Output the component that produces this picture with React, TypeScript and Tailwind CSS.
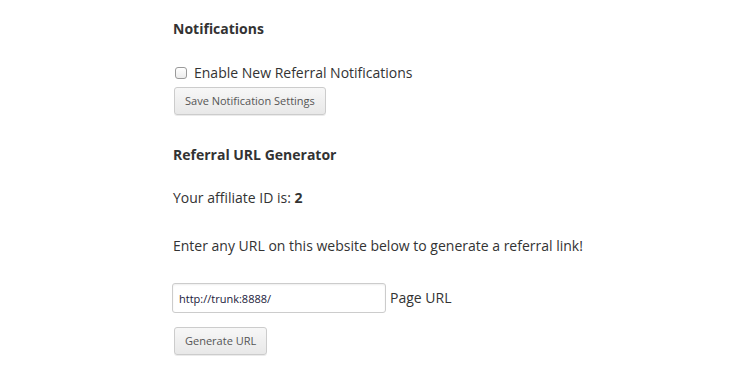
export default function App() {
  const font = { fontFamily: '"Open Sans", "Liberation Sans", sans-serif' };
  const btn =
    "h-[28px] rounded-[3px] border border-[#cccccc] bg-gradient-to-b from-[#f7f7f7] to-[#e8e8e8] px-[10px] text-[11px] text-[#555555] shadow-[0_1px_0_rgba(0,0,0,0.08)]";
  return (
    <div className="w-[750px] h-[381px] bg-white text-[#333333] text-[14px]" style={font}>
      <div className="pl-[173px] pt-[19px]">
        <h3 className="font-bold text-[14px] leading-[20px]">Notifications</h3>
        <label className="mt-[24px] flex items-center h-[20px]">
          <span className="ml-[2px] w-[12px] h-[12px] rounded-[3px] border border-[#9a9a9a] bg-gradient-to-b from-white to-[#ececec]" />
          <span className="ml-[7px] leading-[20px]">Enable New Referral Notifications</span>
        </label>
        <button className={`mt-[4px] ml-[1px] ${btn}`} style={font}>
          Save Notification Settings
        </button>
        <h3 className="mt-[30px] font-bold text-[14px] leading-[20px]">Referral URL Generator</h3>
        <p className="mt-[23px] leading-[20px]">
          Your affiliate ID is: <strong>2</strong>
        </p>
        <p className="mt-[28px] leading-[20px]">
          Enter any URL on this website below to generate a referral link!
        </p>
        <div className="mt-[27px] flex items-center">
          <input
            defaultValue="http://trunk:8888/"
            className="ml-[-1px] w-[214px] h-[30px] rounded-[3px] border border-[#cccccc] px-[6px] text-[11px] text-[#1a1a3a] shadow-[inset_0_1px_2px_rgba(0,0,0,0.07)] outline-none"
            style={{ fontFamily: '"Open Sans", "Liberation Sans", sans-serif' }}
          />
          <span className="ml-[4px] leading-[20px]">Page URL</span>
        </div>
        <button className={`mt-[14px] ml-[1px] ${btn}`} style={font}>
          Generate URL
        </button>
      </div>
    </div>
  );
}
